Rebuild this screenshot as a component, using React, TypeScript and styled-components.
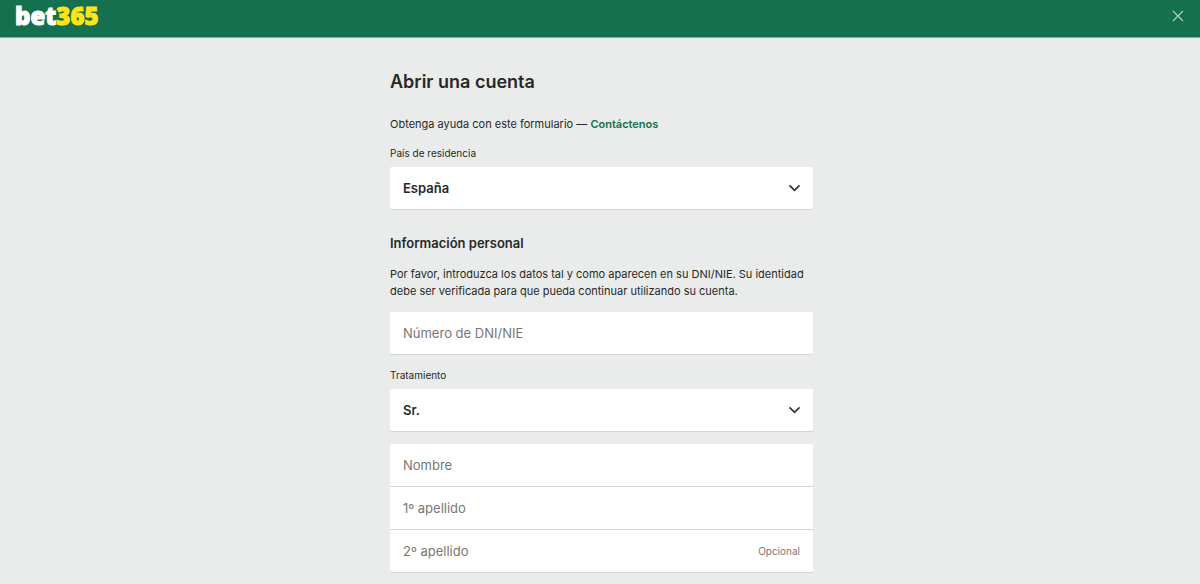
import React, { useId } from "react";
import styled, { createGlobalStyle } from "styled-components";

const GlobalStyle = createGlobalStyle`
  *, *::before, *::after { box-sizing: border-box; }
  body {
    margin: 0;
    background: #eaeceb;
    color: #282828;
    font-family: Inter, "Liberation Sans", sans-serif;
    font-size: 11px;
    line-height: 17px;
  }
`;

const Header = styled.header`
  display: flex;
  align-items: center;
  justify-content: space-between;
  height: 38px;
  padding: 0 16px 5px 15px;
  background: #14704f;
  border-bottom: 1px solid #7fb09d;
`;

const Logo = styled.a`
  color: #fff;
  font-family: "Open Sans", "Noto Sans", sans-serif;
  font-size: 24px;
  font-weight: 800;
  line-height: 32px;
  text-decoration: none;
  -webkit-text-stroke: 1px currentColor;
`;

const LogoNumber = styled.span`
  color: #ffe418;
`;

const CloseButton = styled.button`
  display: flex;
  padding: 0;
  border: 0;
  background: none;
  color: #b5d2c7;
  cursor: pointer;
`;

const Main = styled.main`
  display: flex;
  justify-content: center;
  padding: 32px 0 8px 3px;
`;

const Form = styled.form`
  display: flex;
  flex-direction: column;
  width: 100%;
  max-width: 423px;
`;

const Title = styled.h1`
  margin: 0 0 22px;
  font-size: 18px;
  font-weight: 600;
  line-height: 24px;
`;

const SectionTitle = styled.h2`
  margin: 24px 0 13px;
  font-size: 13px;
  font-weight: 600;
  line-height: 20px;
`;

const Text = styled.p`
  margin: 0 0 12px;
`;

const HelpLink = styled.a`
  color: #14704f;
  font-weight: 600;
  text-decoration: none;
`;

const Label = styled.label`
  margin-bottom: 5px;
  font-size: 10px;
  line-height: 17px;
`;

const Panel = styled.div`
  background: #fff;
  border-radius: 2px;
  box-shadow: 0 1px 0 #d3d6d5;
`;

const Row = styled.div`
  display: flex;
  align-items: center;
  height: 42px;
  padding-right: 13px;

  & + & {
    height: 43px;
    border-top: 1px solid #d3d6d5;
  }
`;

const Input = styled.input`
  flex: 1;
  min-width: 0;
  height: 100%;
  padding: 0 13px;
  border: 0;
  background: none;
  color: #282828;
  font: inherit;
  font-size: 13px;

  &::placeholder {
    color: #777;
    opacity: 1;
  }
`;

const SelectRow = styled.div`
  display: grid;
  align-items: center;
  height: 42px;

  & > * {
    grid-area: 1 / 1;
  }
`;

const Select = styled.select`
  appearance: none;
  width: 100%;
  height: 42px;
  padding: 0 40px 0 13px;
  border: 0;
  background: none;
  color: #282828;
  font: inherit;
  font-size: 13px;
  font-weight: 600;
`;

const Chevron = styled.svg`
  justify-self: end;
  margin-right: 12px;
  pointer-events: none;
`;

const Hint = styled.span`
  color: #777;
  font-size: 10px;
`;

const Fields = styled.div`
  display: flex;
  flex-direction: column;
  gap: 13px;
`;

const Field = styled.div`
  display: flex;
  flex-direction: column;
`;

function SelectField({ label, options }: { label: string; options: string[] }) {
  const id = useId();
  return (
    <Field>
      <Label htmlFor={id}>{label}</Label>
      <Panel>
        <SelectRow>
          <Select id={id}>
            {options.map((o) => (
              <option key={o}>{o}</option>
            ))}
          </Select>
          <Chevron width="13" height="8" viewBox="0 0 13 8" fill="none" aria-hidden="true">
            <path d="M1.5 1.3 6.5 6.3 11.5 1.3" stroke="#333" strokeWidth="1.7" />
          </Chevron>
        </SelectRow>
      </Panel>
    </Field>
  );
}

function TextRow({ label, hint }: { label: string; hint?: string }) {
  return (
    <Row>
      <Input type="text" placeholder={label} aria-label={label} />
      {hint && <Hint>{hint}</Hint>}
    </Row>
  );
}

export default function App() {
  return (
    <>
      <GlobalStyle />
      <Header>
        <Logo href="#">
          bet<LogoNumber>365</LogoNumber>
        </Logo>
        <CloseButton type="button" aria-label="Cerrar">
          <svg width="12" height="12" viewBox="0 0 12 12" fill="none">
            <path d="M1 1 11 11M11 1 1 11" stroke="currentColor" strokeWidth="1.1" />
          </svg>
        </CloseButton>
      </Header>
      <Main>
        <Form>
          <Title>Abrir una cuenta</Title>
          <Text>
            Obtenga ayuda con este formulario — <HelpLink href="#">Contáctenos</HelpLink>
          </Text>
          <SelectField label="País de residencia" options={["España"]} />
          <SectionTitle>Información personal</SectionTitle>
          <Text>
            Por favor, introduzca los datos tal y como aparecen en su DNI/NIE. Su identidad debe ser
            verificada para que pueda continuar utilizando su cuenta.
          </Text>
          <Fields>
            <Panel>
              <TextRow label="Número de DNI/NIE" />
            </Panel>
            <SelectField label="Tratamiento" options={["Sr.", "Sra."]} />
            <Panel>
              <TextRow label="Nombre" />
              <TextRow label="1º apellido" />
              <TextRow label="2º apellido" hint="Opcional" />
            </Panel>
          </Fields>
        </Form>
      </Main>
    </>
  );
}
